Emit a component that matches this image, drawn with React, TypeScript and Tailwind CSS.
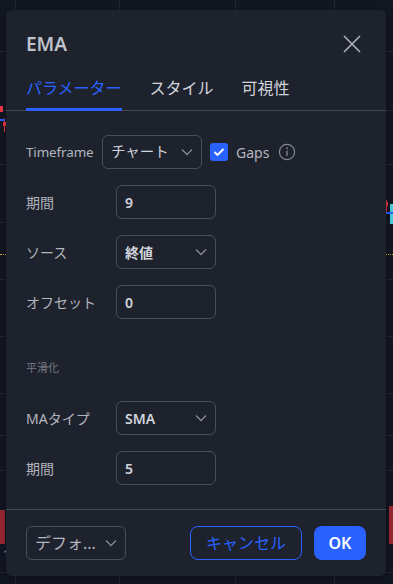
import React from "react";

const Chevron = ({ className = "" }: { className?: string }) => (
  <svg width="12" height="8" viewBox="0 0 12 8" className={className} fill="none">
    <path d="M1 1.5 L6 6.5 L11 1.5" stroke="#868993" strokeWidth="1.3" />
  </svg>
);

const Select = ({ value, x = false }: { value: string; x?: boolean }) => (
  <div className="flex h-[34px] w-[100px] items-center justify-between rounded-[6px] border border-[#4a4e5a] pl-[8px] pr-[8px]">
    <span className={x ? "text-[14.5px] text-[#d1d4dc]" : "text-[14px] font-semibold text-[#d1d4dc]"}>{value}</span>
    <Chevron />
  </div>
);

const Input = ({ value }: { value: string }) => (
  <div className="flex h-[34px] w-[100px] items-center rounded-[6px] border border-[#4a4e5a] pl-[8px]">
    <span className="text-[14px] font-semibold text-[#d1d4dc]">{value}</span>
  </div>
);

const Row = ({ label, children }: { label: string; children: React.ReactNode }) => (
  <div className="flex h-[34px] items-center">
    <div className="w-[90px] text-[14px] text-[#b2b5be]">{label}</div>
    {children}
  </div>
);

export default function App() {
  const vlines = [15, 119, 235, 334];
  const hlines = [51, 110, 164, 222, 279, 336, 393, 435, 470, 572];
  return (
    <div
      className="relative h-[584px] w-[393px] overflow-hidden bg-[#131722]"
      style={{ fontFamily: '"Noto Sans", "Noto Sans CJK JP", sans-serif' }}
    >
      {vlines.map((x) => (
        <div key={x} className="absolute top-0 h-full w-px bg-[#232733]" style={{ left: x }} />
      ))}
      {hlines.map((y) => (
        <div key={y} className="absolute left-0 h-px w-full bg-[#232733]" style={{ top: y }} />
      ))}
      {/* chart bits */}
      <div className="absolute left-0 top-[106px] h-[6px] w-[3px] bg-[#f23645]" />
      <div className="absolute left-[4px] top-[118px] h-[14px] w-px bg-[#f23645]" />
      <div className="absolute left-[3px] top-[122px] h-[4px] w-[3px] bg-[#f23645]" />
      <div className="absolute left-0 top-[119px] h-[2px] w-[5px] bg-[#2962ff]" />
      <div className="absolute left-0 top-[510px] h-[34px] w-[5px] bg-[#9c2a33]" />
      <div className="absolute right-0 top-[506px] h-[38px] w-[4px] bg-[#9c2a33]" />
      <div className="absolute right-[6px] top-[200px] h-[12px] w-px bg-[#f23645]" />
      <div className="absolute right-[5px] top-[202px] h-[4px] w-[3px] bg-[#f23645]" />
      <div className="absolute right-0 top-[204px] h-[20px] w-[3px] bg-[#4dd0e1]" />
      <div className="absolute right-0 top-[212px] h-[2px] w-[7px] bg-[#2962ff]" />
      <div className="absolute left-0 top-[254px] w-[6px] border-t border-dotted border-[#c9a227]" />
      <div className="absolute right-0 top-[254px] w-[7px] border-t border-dotted border-[#c9a227]" />
      <div className="absolute left-[3px] top-[546px] text-[12px] text-[#b2b5be]">1</div>

      {/* dialog */}
      <div className="absolute left-[6px] top-[10px] flex h-[566px] w-[380px] flex-col rounded-[6px] bg-[#1e222d] shadow-[0_2px_8px_rgba(0,0,0,0.4)]">
        <div className="flex h-[58px] items-start justify-between pl-[20px] pr-[24px] pt-[22px]">
          <div className="text-[19px] font-semibold leading-[24px] text-[#bfc2ca]">EMA</div>
          <svg width="20" height="20" viewBox="0 0 20 20" className="mt-[2px]" fill="none">
            <path d="M2 2 L18 18 M18 2 L2 18" stroke="#b2b5be" strokeWidth="1.5" />
          </svg>
        </div>
        <div className="flex h-[43px] items-end gap-[28px] border-b border-[#434651] px-[20px]">
          <div className="relative pb-[10px] text-[16px] leading-[24px] text-[#2962ff]">
            パラメーター
            <div className="absolute bottom-[-1px] left-0 h-[3px] w-full bg-[#2962ff]" />
          </div>
          <div className="pb-[10px] text-[16px] leading-[24px] text-[#d1d4dc]">スタイル</div>
          <div className="pb-[10px] text-[16px] leading-[24px] text-[#d1d4dc]">可視性</div>
        </div>

        <div className="flex flex-1 flex-col px-[20px] pt-[24px]">
          <div className="flex h-[34px] items-center gap-[8px]">
            <div className="w-[68px] whitespace-nowrap text-[13.4px] tracking-[-0.1px] text-[#b2b5be]">Timeframe</div>
            <Select value="チャート" x />
            <div className="flex h-[18px] w-[18px] items-center justify-center rounded-[3px] bg-[#2962ff]">
              <svg width="12" height="10" viewBox="0 0 12 10" fill="none">
                <path d="M1.5 5 L4.5 8 L10.5 2" stroke="white" strokeWidth="1.8" />
              </svg>
            </div>
            <div className="text-[14px] text-[#b2b5be]">Gaps</div>
            <svg width="18" height="18" viewBox="0 0 18 18" className="ml-[1px]" fill="none">
              <circle cx="9" cy="9" r="7.6" stroke="#868993" strokeWidth="1.2" />
              <path d="M9 7.5 V13" stroke="#868993" strokeWidth="1.3" />
              <circle cx="9" cy="5.2" r="0.9" fill="#868993" />
            </svg>
          </div>
          <div className="mt-[16px] flex flex-col gap-[16px]">
            <Row label="期間"><Input value="9" /></Row>
            <Row label="ソース"><Select value="終値" /></Row>
            <Row label="オフセット"><Input value="0" /></Row>
          </div>
          <div className="mt-[41px] text-[11px] leading-[16px] text-[#787b86]">平滑化</div>
          <div className="mt-[25px] flex flex-col gap-[16px]">
            <Row label="MAタイプ"><Select value="SMA" /></Row>
            <Row label="期間"><Input value="5" /></Row>
          </div>
        </div>

        <div className="flex items-center border-t border-[#434651] px-[20px] pb-[16px] pt-[16px]">
          <div className="flex h-[34px] w-[100px] items-center justify-between rounded-[6px] border border-[#4a4e5a] pl-[8px] pr-[8px]">
            <span className="text-[16px] text-[#b2b5be]">デフォ...</span>
            <Chevron />
          </div>
          <div className="ml-auto flex h-[34px] w-[112px] items-center justify-center rounded-[8px] border border-[#2962ff] text-[16px] text-[#2962ff]">
            キャンセル
          </div>
          <div className="ml-[12px] flex h-[34px] w-[52px] items-center justify-center rounded-[8px] bg-[#2962ff] text-[16px] font-semibold text-white">
            OK
          </div>
        </div>
      </div>
    </div>
  );
}
